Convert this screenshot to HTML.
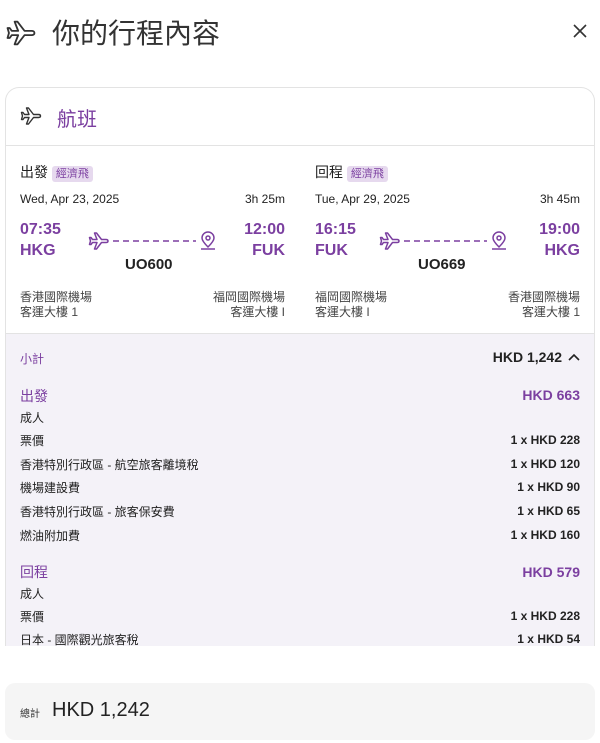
<!DOCTYPE html><html><head><meta charset="utf-8"><style>
*{margin:0;padding:0;box-sizing:border-box}
body{width:600px;height:743px;background:#fff;font-family:"Liberation Sans","Noto Sans CJK TC",sans-serif;color:#222;position:relative;overflow:hidden}
.a{position:absolute;white-space:nowrap}
.p{color:#7b3fa0}
.r{text-align:right}
.b{font-weight:bold}
.s{font-size:12px}
.badge{background:#e6d9ee;color:#7b3fa0;font-size:11px;padding:2px 4px;border-radius:3px}
</style></head><body>
<svg class="a" style="left:4px;top:16px" width="34" height="34" viewBox="0 0 24 24" fill="none" stroke="#333" stroke-width="1.3" stroke-linejoin="round"><path d="M21.5 12c0-1-1-1.5-2-1.5h-5L9.5 4H7.5l2.5 6.5H5.5L4 8.5H2.5l1 3.5-1 3.5H4l1.5-2h4.5L7.5 20h2l5-6.5h5c1 0 2-.5 2-1.5z"/></svg>
<div class="a" style="left:52px;top:12px;font-size:28px;color:#333">你的行程內容</div>
<svg class="a" style="left:573px;top:24px" width="14" height="14" viewBox="0 0 14 14"><path d="M1 1l12 12M13 1L1 13" stroke="#333" stroke-width="1.6"/></svg>

<div class="a" style="left:5px;top:87px;width:590px;height:620px;border:1px solid #e3e3e3;border-bottom:none;border-radius:14px 14px 0 0"></div>
<svg class="a" style="left:19px;top:104px" width="24" height="24" viewBox="0 0 24 24" fill="none" stroke="#333" stroke-width="1.4" stroke-linejoin="round"><path d="M21.5 12c0-1-1-1.5-2-1.5h-5L9.5 4H7.5l2.5 6.5H5.5L4 8.5H2.5l1 3.5-1 3.5H4l1.5-2h4.5L7.5 20h2l5-6.5h5c1 0 2-.5 2-1.5z"/></svg>
<div class="a p" style="left:57px;top:103px;font-size:20px">航班</div>
<div class="a" style="left:6px;top:145px;width:588px;height:1px;background:#e3e3e3"></div>

<!-- seg 1 -->
<div class="a" style="left:20px;top:162px;font-size:14px">出發 <span class="badge">經濟飛</span></div>
<div class="a s" style="left:20px;top:192px">Wed, Apr 23, 2025</div>
<div class="a s r" style="left:185px;width:100px;top:192px">3h 25m</div>
<div class="a p b" style="left:20px;top:221px;font-size:16px">07:35</div>
<div class="a p b" style="left:20px;top:242px;font-size:16px">HKG</div>
<div class="a p b r" style="left:185px;width:100px;top:221px;font-size:16px">12:00</div>
<div class="a p b r" style="left:185px;width:100px;top:242px;font-size:16px">FUK</div>
<svg class="a" style="left:86px;top:230px" width="134" height="24" viewBox="0 0 134 24" fill="none" stroke="#7b3fa0" stroke-width="1.5" stroke-linejoin="round"><path d="M22 11c0-1-1-1.5-2-1.5h-4.5L10.5 3h-2l2.5 6.5H6.5L5 7.5H3.5l1 3.5-1 3.5H5l1.5-2H11L8.5 19h2l5-6.5H20c1 0 2-.5 2-1.5z"/><path d="M27 11H110" stroke-dasharray="6 4"/><path d="M122 17c-4-4-6-7-6-9a6 6 0 0112 0c0 2-2 5-6 9z"/><circle cx="122" cy="8" r="2"/><path d="M115 19h14"/></svg>
<div class="a b" style="left:125px;top:256px;font-size:15px">UO600</div>
<div class="a s" style="left:20px;top:288px;color:#444">香港國際機場</div>
<div class="a s" style="left:20px;top:303px;color:#444">客運大樓 1</div>
<div class="a s r" style="left:185px;width:100px;top:288px;color:#444">福岡國際機場</div>
<div class="a s r" style="left:185px;width:100px;top:303px;color:#444">客運大樓 I</div>

<!-- seg 2 -->
<div class="a" style="left:315px;top:162px;font-size:14px">回程 <span class="badge">經濟飛</span></div>
<div class="a s" style="left:315px;top:192px">Tue, Apr 29, 2025</div>
<div class="a s r" style="left:480px;width:100px;top:192px">3h 45m</div>
<div class="a p b" style="left:315px;top:221px;font-size:16px">16:15</div>
<div class="a p b" style="left:315px;top:242px;font-size:16px">FUK</div>
<div class="a p b r" style="left:480px;width:100px;top:221px;font-size:16px">19:00</div>
<div class="a p b r" style="left:480px;width:100px;top:242px;font-size:16px">HKG</div>
<svg class="a" style="left:377px;top:230px" width="134" height="24" viewBox="0 0 134 24" fill="none" stroke="#7b3fa0" stroke-width="1.5" stroke-linejoin="round"><path d="M22 11c0-1-1-1.5-2-1.5h-4.5L10.5 3h-2l2.5 6.5H6.5L5 7.5H3.5l1 3.5-1 3.5H5l1.5-2H11L8.5 19h2l5-6.5H20c1 0 2-.5 2-1.5z"/><path d="M27 11H110" stroke-dasharray="6 4"/><path d="M122 17c-4-4-6-7-6-9a6 6 0 0112 0c0 2-2 5-6 9z"/><circle cx="122" cy="8" r="2"/><path d="M115 19h14"/></svg>
<div class="a b" style="left:418px;top:256px;font-size:15px">UO669</div>
<div class="a s" style="left:315px;top:288px;color:#444">福岡國際機場</div>
<div class="a s" style="left:315px;top:303px;color:#444">客運大樓 I</div>
<div class="a s r" style="left:480px;width:100px;top:288px;color:#444">香港國際機場</div>
<div class="a s r" style="left:480px;width:100px;top:303px;color:#444">客運大樓 1</div>

<!-- price -->
<div class="a" style="left:6px;top:333px;width:588px;height:313px;background:#f4f2f8;border-top:1px solid #e3e3e3"></div>
<div class="a p s" style="left:20px;top:350px">小計</div>
<div class="a b r" style="left:380px;width:182px;top:349px;font-size:14px">HKD 1,242</div>
<svg class="a" style="left:567px;top:351px" width="14" height="12" viewBox="0 0 14 12"><path d="M2 9l5-5 5 5" fill="none" stroke="#222" stroke-width="1.6"/></svg>
<div class="a p" style="left:20px;top:386px;font-size:14px">出發</div>
<div class="a p b r" style="left:380px;width:200px;top:387px;font-size:14px">HKD 663</div>
<div class="a s" style="left:20px;top:409px">成人</div>
<div class="a s" style="left:20px;top:432px">票價</div><div class="a s b r" style="left:380px;width:200px;top:433px">1 x HKD 228</div>
<div class="a s" style="left:20px;top:456px">香港特別行政區 - 航空旅客離境稅</div><div class="a s b r" style="left:380px;width:200px;top:457px">1 x HKD 120</div>
<div class="a s" style="left:20px;top:479px">機場建設費</div><div class="a s b r" style="left:380px;width:200px;top:480px">1 x HKD 90</div>
<div class="a s" style="left:20px;top:503px">香港特別行政區 - 旅客保安費</div><div class="a s b r" style="left:380px;width:200px;top:504px">1 x HKD 65</div>
<div class="a s" style="left:20px;top:527px">燃油附加費</div><div class="a s b r" style="left:380px;width:200px;top:528px">1 x HKD 160</div>
<div class="a p" style="left:20px;top:562px;font-size:14px">回程</div>
<div class="a p b r" style="left:380px;width:200px;top:564px;font-size:14px">HKD 579</div>
<div class="a s" style="left:20px;top:585px">成人</div>
<div class="a s" style="left:20px;top:608px">票價</div><div class="a s b r" style="left:380px;width:200px;top:609px">1 x HKD 228</div>
<div class="a s" style="left:20px;top:631px">日本 - 國際觀光旅客稅</div><div class="a s b r" style="left:380px;width:200px;top:632px">1 x HKD 54</div>
<div class="a" style="left:0;top:646px;width:600px;height:97px;background:#fff"></div>

<div class="a" style="left:5px;top:683px;width:590px;height:57px;background:#f5f5f5;border-radius:10px"></div>
<div class="a" style="left:20px;top:705px;font-size:10px;color:#333">總計</div>
<div class="a" style="left:52px;top:699px;font-size:20px;color:#222">HKD 1,242</div>
</body></html>
